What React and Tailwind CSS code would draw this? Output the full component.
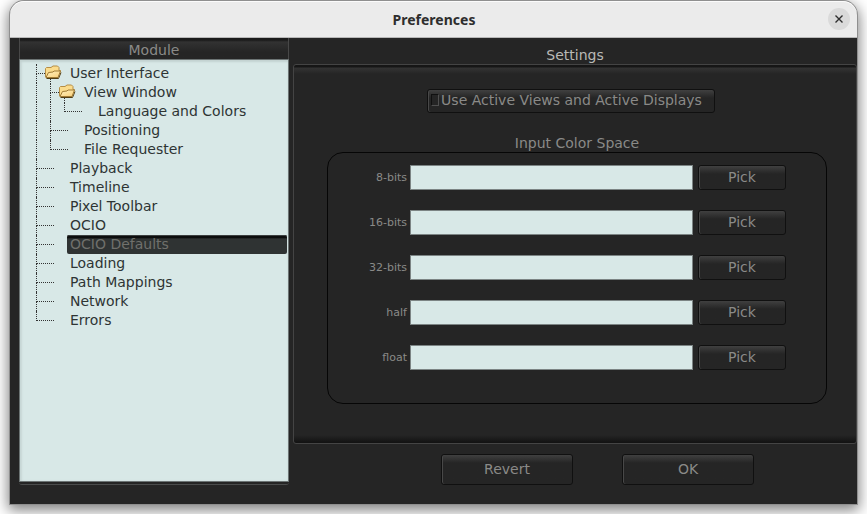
import React, { useState } from "react";

// guides: one entry per ancestor level, true where that level's line continues
const TREE = [
  { label: "User Interface", folder: true, guides: [] },
  { label: "View Window", folder: true, guides: [true] },
  { label: "Language and Colors", guides: [true, true], last: true },
  { label: "Positioning", guides: [true] },
  { label: "File Requester", guides: [true], last: true },
  { label: "Playback", guides: [] },
  { label: "Timeline", guides: [] },
  { label: "Pixel Toolbar", guides: [] },
  { label: "OCIO", guides: [] },
  { label: "OCIO Defaults", guides: [] },
  { label: "Loading", guides: [] },
  { label: "Path Mappings", guides: [] },
  { label: "Network", guides: [] },
  { label: "Errors", guides: [], last: true },
];

const SPACES = ["8-bits", "16-bits", "32-bits", "half", "float"];

function FolderIcon() {
  return (
    <svg width="17" height="19" viewBox="0 0 17 19" className="shrink-0" aria-hidden="true">
      <defs>
        <linearGradient id="folderFront" x1="0" y1="0" x2="1" y2="1">
          <stop offset="0" stopColor="#fff0bd" />
          <stop offset="1" stopColor="#f8cf7a" />
        </linearGradient>
      </defs>
      <path d="M1.5 14.5H13.5L16 8.5" fill="none" stroke="#4f3c14" strokeWidth="1" />
      <path
        d="M.5 13V4.5L1.5 3.5H6L8 2h4.5l1.5 1.5v3h1.5L13 13.5H1z"
        fill="#fbdc8c"
        stroke="#b58d45"
      />
      <path
        d="M1 13.5L3.5 8.5 8 8l1-1h6.5L13 13.5z"
        fill="url(#folderFront)"
        stroke="#a07a34"
      />
      <path d="M5.5 15v4" stroke="#333" strokeDasharray="1 1" />
    </svg>
  );
}

function TreeRow({ item, selected, onSelect }) {
  return (
    <li className="flex h-[19px]" role="treeitem" aria-selected={selected}>
      {item.guides.map((_, i) => (
        <span key={i} className="w-[14px] shrink-0 border-l border-dotted border-[#333]" />
      ))}
      <span className={item.folder ? "w-[9px] shrink-0" : "w-[31px] shrink-0"}>
        <span
          className={
            "block h-[10px] border-b border-l border-dotted border-[#333] " +
            (item.folder ? "w-[9px]" : "w-[18px]")
          }
        />
        {!item.last && <span className="block h-[9px] border-l border-dotted border-[#333]" />}
      </span>
      {item.folder && (
        <span className="w-[22px] shrink-0">
          <FolderIcon />
        </span>
      )}
      <button
        type="button"
        onClick={onSelect}
        className={
          "flex-1 rounded-[2px] px-[3px] text-left leading-[19px] whitespace-nowrap " +
          (selected
            ? "bg-linear-to-b from-[#0c0d0d] from-15% to-[#2f3333] to-20% text-[#70706c] shadow-[inset_0_1px_0_#3c4040]"
            : "text-[#2e3434]")
        }
      >
        {item.label}
      </button>
    </li>
  );
}

function PushButton({ size, children, ...rest }) {
  return (
    <button
      type="button"
      {...rest}
      className={
        "shrink-0 rounded-[3px] border border-[#101010] bg-linear-to-b from-[#404040] to-[#252525] to-[8px] pb-[2px] shadow-[inset_1px_0_0_#484848] text-[#8a8a88] " +
        size
      }
    >
      {children}
    </button>
  );
}

export default function App() {
  const [selected, setSelected] = useState("OCIO Defaults");
  return (
    <div className="flex min-h-screen bg-white px-[10px] pt-px pb-[10px] font-['DejaVu_Sans',sans-serif] text-sm">
      <div className="flex flex-1 flex-col rounded-t-[14px] bg-[#252525] shadow-[0_0_0_1px_#8f8f8f,0_4px_14px_2px_rgba(0,0,0,0.5)]">
        <header className="flex h-[37px] items-center rounded-t-[14px] border-b border-[#b8b8b8] bg-[#ebebeb] pr-[7px] pl-2 shadow-[inset_0_1px_0_#fbfbfb]">
          <span className="w-[22px]" />
          <h1 className="flex-1 pt-px text-center font-['Noto_Sans','Open_Sans',sans-serif] text-sm font-bold text-[#2e2e2e]">
            Preferences
          </h1>
          <button
            type="button"
            aria-label="Close"
            className="flex size-[22px] items-center justify-center rounded-full bg-[#dadada]"
          >
            <svg width="8" height="8" viewBox="0 0 8 8" aria-hidden="true">
              <path d="M.5.5l7 7M7.5.5l-7 7" stroke="#2e2e2e" strokeWidth="1.4" />
            </svg>
          </button>
        </header>

        <div className="flex flex-1">
          <section className="ml-[9px] mb-[19px] flex w-[270px] shrink-0 flex-col rounded-b-[3px] border-b border-[#4a4c4c]">
            <h2 className="h-[21px] border-x border-[#484848] bg-linear-to-b from-[#1a1a1a] from-[2px] via-[#323232] via-[4px] to-[#252525] to-[14px] pt-px text-center leading-[22px] text-[#8a8a88]">
              Module
            </h2>
            <ul
              role="tree"
              aria-label="Module"
              className="mb-[2px] flex-1 border border-[#6c7474] bg-[#d8e8e7] pt-1 pr-px pl-4 shadow-[inset_0_2px_2px_#c3d2d1,inset_2px_0_2px_#c9d8d7]"
            >
              {TREE.map((item) => (
                <TreeRow
                  key={item.label}
                  item={item}
                  selected={item.label === selected}
                  onSelect={() => setSelected(item.label)}
                />
              ))}
            </ul>
          </section>

          <main className="ml-1 flex flex-1 flex-col">
            <h2 className="h-[26px] pt-[6px] text-center leading-[22px] text-[#b9b9b6]">Settings</h2>
            <section className="flex flex-1 flex-col rounded-[3px] border border-[#444] bg-[linear-gradient(to_bottom,#161616_2px,#333_3px,#252525_9px,#252525_calc(100%-8px),#161616_calc(100%-2px),#121212)] pt-6 pr-[29px] pb-[39px] pl-[33px]">
              <div className="flex justify-center pr-3">
                <label className="flex h-6 items-center gap-[2px] rounded-[3px] border border-[#101010] bg-linear-to-b from-[#404040] to-[#252525] to-[8px] pr-3 pb-[2px] pl-[3px] whitespace-nowrap text-[#8a8a88] shadow-[inset_1px_0_0_#484848]">
                  <input
                    type="checkbox"
                    className="h-3 w-2 appearance-none border border-t-[#101010] border-r-[#505050] border-b-[#505050] border-l-[#101010] bg-[#252525] checked:bg-[#d8e8e7]"
                  />
                  Use Active Views and Active Displays
                </label>
              </div>
              <fieldset className="mt-5 flex flex-1 flex-col">
                <legend className="w-full pt-px text-center leading-[18px] text-[#8a8a88]">
                  Input Color Space
                </legend>
                <div className="flex-1 space-y-5 rounded-2xl border border-[#060606] pt-3 pr-10 pb-8">
                  {SPACES.map((name) => (
                    <div key={name} className="flex items-center">
                      <label
                        htmlFor={"space-" + name}
                        className="w-[82px] shrink-0 pr-[3px] text-right text-[11px] text-[#8a8a88]"
                      >
                        {name}
                      </label>
                      <input
                        id={"space-" + name}
                        type="text"
                        className="h-[25px] min-w-0 flex-1 border border-[#7c8484] bg-[#d8e8e7] px-1 text-[#2e3434]"
                      />
                      <span className="w-[5px] shrink-0" />
                      <PushButton size="h-[25px] w-[88px]" aria-label={"Pick " + name}>
                        Pick
                      </PushButton>
                    </div>
                  ))}
                </div>
              </fieldset>
            </section>
            <footer className="flex justify-center gap-[49px] pt-[10px] pb-[19px] pl-[45px]">
              <PushButton size="h-[31px] w-[132px]">Revert</PushButton>
              <PushButton size="h-[31px] w-[132px]">OK</PushButton>
            </footer>
          </main>
        </div>
      </div>
    </div>
  );
}
